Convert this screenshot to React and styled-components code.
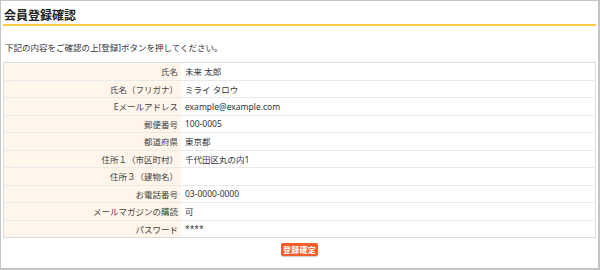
import React from 'react';
import styled, { createGlobalStyle } from 'styled-components';

const GlobalStyle = createGlobalStyle`
  html, body {
    margin: 0;
    padding: 0;
    background: #fff;
  }
  body {
    font-family: "Noto Sans", "Noto Sans CJK JP", sans-serif;
    color: #333;
  }
`;

const Frame = styled.div`
  box-sizing: border-box;
  width: 600px;
  height: 270px;
  border: 1px solid #c4c4c4;
  border-right-width: 2px;
  border-bottom-width: 2px;
  padding: 0 2px;
`;

const Title = styled.h1`
  margin: 0;
  padding: 7px 1px 0;
  height: 16px;
  font-size: 12px;
  line-height: 16px;
  font-weight: bold;
  color: #222;
  border-bottom: 2px solid #ffc845;
`;

const Lead = styled.p`
  margin: 0;
  padding: 16px 2px 0;
  height: 20px;
  font-size: 8.5px;
  line-height: 12px;
  color: #333;
`;

const Table = styled.table`
  width: 100%;
  border-collapse: collapse;
  border: 1px solid #dcdcdc;
  font-size: 8.5px;
`;

const Row = styled.tr`
  border-bottom: 1px solid #e9e9e9;
  &:last-child {
    border-bottom: none;
  }
`;

const Label = styled.th`
  width: 174px;
  height: 16.5px;
  padding: 0 3px 0 0;
  background: #fff5ea;
  text-align: right;
  font-weight: normal;
  color: #444;
  white-space: nowrap;
`;

const Value = styled.td`
  height: 16.5px;
  padding: 0 0 0 4px;
  color: #333;
`;

const Actions = styled.div`
  display: flex;
  justify-content: center;
  padding-top: 5px;
`;

const Button = styled.button`
  width: 37px;
  height: 13px;
  padding: 0;
  border: none;
  border-radius: 2px;
  background: #f55d2a;
  box-shadow: 0 1px 1px rgba(0, 0, 0, 0.2);
  color: #fff;
  font-family: "Noto Sans CJK JP", sans-serif;
  font-size: 8px;
  font-weight: bold;
  line-height: 13px;
  letter-spacing: 0.2px;
`;

const rows = [
  ['氏名', '未来 太郎'],
  ['氏名（フリガナ）', 'ミライ タロウ'],
  ['Eメールアドレス', 'example@example.com'],
  ['郵便番号', '100-0005'],
  ['都道府県', '東京都'],
  ['住所１（市区町村）', '千代田区丸の内1'],
  ['住所３（建物名）', ''],
  ['お電話番号', '03-0000-0000'],
  ['メールマガジンの購読', '可'],
  ['パスワード', '****'],
];

export default function App() {
  return (
    <>
      <GlobalStyle />
      <Frame>
        <Title>会員登録確認</Title>
        <Lead>下記の内容をご確認の上[登録]ボタンを押してください。</Lead>
        <Table>
          <tbody>
            {rows.map(([label, value]) => (
              <Row key={label}>
                <Label>{label}</Label>
                <Value>{value}</Value>
              </Row>
            ))}
          </tbody>
        </Table>
        <Actions>
          <Button type="button">登録確定</Button>
        </Actions>
      </Frame>
    </>
  );
}
